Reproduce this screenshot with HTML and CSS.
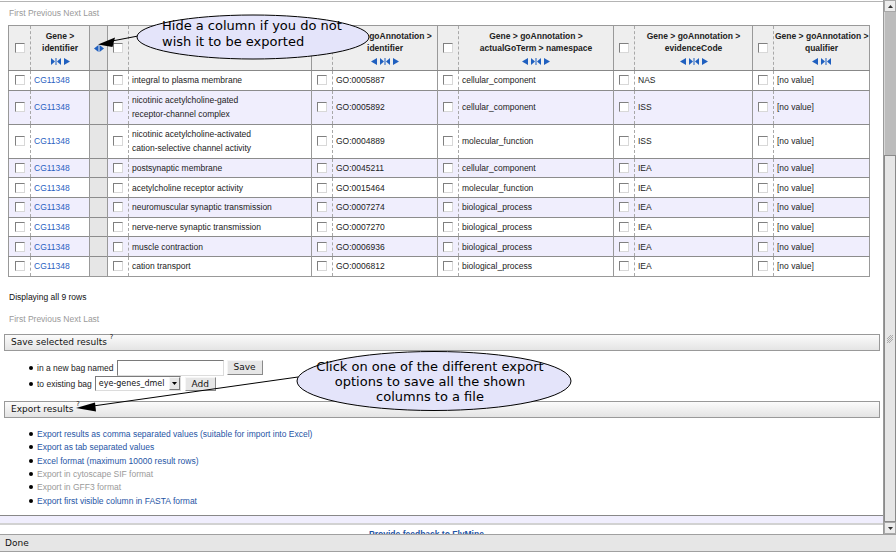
FILE: index.html
```html
<!DOCTYPE html>
<html>
<head>
<meta charset="utf-8">
<title>Results</title>
<link rel="stylesheet" href="styles.css">
</head>
<body>
<div class="window">
  <div class="viewport">
    <div class="page">
      <div class="rule"></div>
      <div class="pager top">First Previous Next Last</div>

      <table class="results">
        <colgroup>
          <col class="w-cb1"><col class="w-id"><col class="w-col"><col class="w-cb"><col class="w-name"><col class="w-cb"><col class="w-goid"><col class="w-cb"><col class="w-ns"><col class="w-cb"><col class="w-ev"><col class="w-cb"><col class="w-qual">
        </colgroup>
        <thead>
          <tr>
            <th class="cbcell"><span class="cb"></span></th>
            <th class="dash">
              <div>Gene &gt;</div><div>identifier</div>
              <div class="icons">
                <svg class="ic-c" viewBox="0 0 10 7"><polygon points="0,0 4,3.5 0,7"/><rect x="4.5" y="0" width="1" height="7"/><polygon points="10,0 6,3.5 10,7"/></svg>
                <svg class="ic" viewBox="0 0 6 7"><polygon points="0,0 6,3.5 0,7"/></svg>
              </div>
            </th>
            <th class="solid collapsed">
              <svg class="ic-e" viewBox="0 0 10 7"><polygon points="0,3.5 4.5,0 4.5,7"/><polygon points="5.5,0 10,3.5 5.5,7"/></svg>
            </th>
            <th class="cbcell solid"><span class="cb"></span></th>
            <th class="dash"></th>
            <th class="cbcell solid"><span class="cb"></span></th>
            <th class="dash">
              <div>Gene &gt; goAnnotation &gt;</div><div>identifier</div>
              <div class="icons">
                <svg class="ic" viewBox="0 0 6 7"><polygon points="6,0 0,3.5 6,7"/></svg>
                <svg class="ic-c" viewBox="0 0 10 7"><polygon points="0,0 4,3.5 0,7"/><rect x="4.5" y="0" width="1" height="7"/><polygon points="10,0 6,3.5 10,7"/></svg>
                <svg class="ic" viewBox="0 0 6 7"><polygon points="0,0 6,3.5 0,7"/></svg>
              </div>
            </th>
            <th class="cbcell solid"><span class="cb"></span></th>
            <th class="dash">
              <div>Gene &gt; goAnnotation &gt;</div><div>actualGoTerm &gt; namespace</div>
              <div class="icons">
                <svg class="ic" viewBox="0 0 6 7"><polygon points="6,0 0,3.5 6,7"/></svg>
                <svg class="ic-c" viewBox="0 0 10 7"><polygon points="0,0 4,3.5 0,7"/><rect x="4.5" y="0" width="1" height="7"/><polygon points="10,0 6,3.5 10,7"/></svg>
                <svg class="ic" viewBox="0 0 6 7"><polygon points="0,0 6,3.5 0,7"/></svg>
              </div>
            </th>
            <th class="cbcell solid"><span class="cb"></span></th>
            <th class="dash">
              <div>Gene &gt; goAnnotation &gt;</div><div>evidenceCode</div>
              <div class="icons">
                <svg class="ic" viewBox="0 0 6 7"><polygon points="6,0 0,3.5 6,7"/></svg>
                <svg class="ic-c" viewBox="0 0 10 7"><polygon points="0,0 4,3.5 0,7"/><rect x="4.5" y="0" width="1" height="7"/><polygon points="10,0 6,3.5 10,7"/></svg>
                <svg class="ic" viewBox="0 0 6 7"><polygon points="0,0 6,3.5 0,7"/></svg>
              </div>
            </th>
            <th class="cbcell solid"><span class="cb"></span></th>
            <th class="dash">
              <div>Gene &gt; goAnnotation &gt;</div><div>qualifier</div>
              <div class="icons">
                <svg class="ic" viewBox="0 0 6 7"><polygon points="6,0 0,3.5 6,7"/></svg>
                <svg class="ic-c" viewBox="0 0 10 7"><polygon points="0,0 4,3.5 0,7"/><rect x="4.5" y="0" width="1" height="7"/><polygon points="10,0 6,3.5 10,7"/></svg>
              </div>
            </th>
          </tr>
        </thead>
        <tbody>
          <tr>
            <td class="cbcell"><span class="cb"></span></td><td class="dash"><a class="gene">CG11348</a></td><td class="solid collapsed"></td>
            <td class="cbcell solid"><span class="cb"></span></td><td class="dash">integral to plasma membrane</td>
            <td class="cbcell solid"><span class="cb"></span></td><td class="dash">GO:0005887</td>
            <td class="cbcell solid"><span class="cb"></span></td><td class="dash">cellular_component</td>
            <td class="cbcell solid"><span class="cb"></span></td><td class="dash">NAS</td>
            <td class="cbcell solid"><span class="cb"></span></td><td class="dash">[no value]</td>
          </tr>
          <tr class="alt">
            <td class="cbcell"><span class="cb"></span></td><td class="dash"><a class="gene">CG11348</a></td><td class="solid collapsed"></td>
            <td class="cbcell solid"><span class="cb"></span></td><td class="dash">nicotinic acetylcholine-gated<br>receptor-channel complex</td>
            <td class="cbcell solid"><span class="cb"></span></td><td class="dash">GO:0005892</td>
            <td class="cbcell solid"><span class="cb"></span></td><td class="dash">cellular_component</td>
            <td class="cbcell solid"><span class="cb"></span></td><td class="dash">ISS</td>
            <td class="cbcell solid"><span class="cb"></span></td><td class="dash">[no value]</td>
          </tr>
          <tr>
            <td class="cbcell"><span class="cb"></span></td><td class="dash"><a class="gene">CG11348</a></td><td class="solid collapsed"></td>
            <td class="cbcell solid"><span class="cb"></span></td><td class="dash">nicotinic acetylcholine-activated<br>cation-selective channel activity</td>
            <td class="cbcell solid"><span class="cb"></span></td><td class="dash">GO:0004889</td>
            <td class="cbcell solid"><span class="cb"></span></td><td class="dash">molecular_function</td>
            <td class="cbcell solid"><span class="cb"></span></td><td class="dash">ISS</td>
            <td class="cbcell solid"><span class="cb"></span></td><td class="dash">[no value]</td>
          </tr>
          <tr class="alt">
            <td class="cbcell"><span class="cb"></span></td><td class="dash"><a class="gene">CG11348</a></td><td class="solid collapsed"></td>
            <td class="cbcell solid"><span class="cb"></span></td><td class="dash">postsynaptic membrane</td>
            <td class="cbcell solid"><span class="cb"></span></td><td class="dash">GO:0045211</td>
            <td class="cbcell solid"><span class="cb"></span></td><td class="dash">cellular_component</td>
            <td class="cbcell solid"><span class="cb"></span></td><td class="dash">IEA</td>
            <td class="cbcell solid"><span class="cb"></span></td><td class="dash">[no value]</td>
          </tr>
          <tr>
            <td class="cbcell"><span class="cb"></span></td><td class="dash"><a class="gene">CG11348</a></td><td class="solid collapsed"></td>
            <td class="cbcell solid"><span class="cb"></span></td><td class="dash">acetylcholine receptor activity</td>
            <td class="cbcell solid"><span class="cb"></span></td><td class="dash">GO:0015464</td>
            <td class="cbcell solid"><span class="cb"></span></td><td class="dash">molecular_function</td>
            <td class="cbcell solid"><span class="cb"></span></td><td class="dash">IEA</td>
            <td class="cbcell solid"><span class="cb"></span></td><td class="dash">[no value]</td>
          </tr>
          <tr class="alt">
            <td class="cbcell"><span class="cb"></span></td><td class="dash"><a class="gene">CG11348</a></td><td class="solid collapsed"></td>
            <td class="cbcell solid"><span class="cb"></span></td><td class="dash">neuromuscular synaptic transmission</td>
            <td class="cbcell solid"><span class="cb"></span></td><td class="dash">GO:0007274</td>
            <td class="cbcell solid"><span class="cb"></span></td><td class="dash">biological_process</td>
            <td class="cbcell solid"><span class="cb"></span></td><td class="dash">IEA</td>
            <td class="cbcell solid"><span class="cb"></span></td><td class="dash">[no value]</td>
          </tr>
          <tr>
            <td class="cbcell"><span class="cb"></span></td><td class="dash"><a class="gene">CG11348</a></td><td class="solid collapsed"></td>
            <td class="cbcell solid"><span class="cb"></span></td><td class="dash">nerve-nerve synaptic transmission</td>
            <td class="cbcell solid"><span class="cb"></span></td><td class="dash">GO:0007270</td>
            <td class="cbcell solid"><span class="cb"></span></td><td class="dash">biological_process</td>
            <td class="cbcell solid"><span class="cb"></span></td><td class="dash">IEA</td>
            <td class="cbcell solid"><span class="cb"></span></td><td class="dash">[no value]</td>
          </tr>
          <tr class="alt">
            <td class="cbcell"><span class="cb"></span></td><td class="dash"><a class="gene">CG11348</a></td><td class="solid collapsed"></td>
            <td class="cbcell solid"><span class="cb"></span></td><td class="dash">muscle contraction</td>
            <td class="cbcell solid"><span class="cb"></span></td><td class="dash">GO:0006936</td>
            <td class="cbcell solid"><span class="cb"></span></td><td class="dash">biological_process</td>
            <td class="cbcell solid"><span class="cb"></span></td><td class="dash">IEA</td>
            <td class="cbcell solid"><span class="cb"></span></td><td class="dash">[no value]</td>
          </tr>
          <tr>
            <td class="cbcell"><span class="cb"></span></td><td class="dash"><a class="gene">CG11348</a></td><td class="solid collapsed"></td>
            <td class="cbcell solid"><span class="cb"></span></td><td class="dash">cation transport</td>
            <td class="cbcell solid"><span class="cb"></span></td><td class="dash">GO:0006812</td>
            <td class="cbcell solid"><span class="cb"></span></td><td class="dash">biological_process</td>
            <td class="cbcell solid"><span class="cb"></span></td><td class="dash">IEA</td>
            <td class="cbcell solid"><span class="cb"></span></td><td class="dash">[no value]</td>
          </tr>
        </tbody>
      </table>

      <div class="count">Displaying all 9 rows</div>
      <div class="pager bottom">First Previous Next Last</div>

      <div class="bar save-bar">Save selected results <sup class="help">?</sup></div>
      <ul class="bag-form">
        <li><span>in a new bag named</span><input class="textbox" type="text"><button class="btn btn-save" type="button">Save</button></li>
        <li><span>to existing bag</span><span class="select"><span class="select-text">eye-genes_dmel</span><span class="select-arrow"><svg viewBox="0 0 5 3"><polygon points="0,0 5,0 2.5,3"/></svg></span></span><button class="btn btn-add" type="button">Add</button></li>
      </ul>

      <div class="bar export-bar">Export results <sup class="help">?</sup></div>
      <ul class="exports">
        <li><a class="link">Export results as comma separated values (suitable for import into Excel)</a></li>
        <li><a class="link">Export as tab separated values</a></li>
        <li><a class="link">Excel format (maximum 10000 result rows)</a></li>
        <li><span class="disabled">Export in cytoscape SIF format</span></li>
        <li><span class="disabled">Export in GFF3 format</span></li>
        <li><a class="link">Export first visible column in FASTA format</a></li>
      </ul>

      <div class="footer-band"></div>
      <div class="feedback"><a class="feedback-link">Provide feedback to FlyMine</a></div>
    </div>

    <svg class="callouts" viewBox="0 0 883 534" width="883" height="534">
      <line x1="112" y1="41" x2="138" y2="36" class="co-line"/>
      <polygon points="98,44.5 115,37.5 112.5,47" class="co-head"/>
      <ellipse cx="253" cy="37" rx="116" ry="22" class="co-bubble"/>
      <text x="162" y="29.5" class="co-text">Hide a column if you do not</text>
      <text x="162" y="45.5" class="co-text">wish it to be exported</text>

      <line x1="93" y1="406" x2="298" y2="377" class="co-line"/>
      <polygon points="76,408 95,402.5 96,411.5" class="co-head"/>
      <ellipse cx="434" cy="381" rx="137" ry="29.5" class="co-bubble"/>
      <text x="430" y="370.5" class="co-text mid">Click on one of the different export</text>
      <text x="430" y="385.5" class="co-text mid">options to save all the shown</text>
      <text x="430" y="400.5" class="co-text mid">columns to a file</text>
    </svg>
  </div>

  <div class="scrollbar">
    <div class="sb-btn"><svg viewBox="0 0 5 3"><polygon points="0,3 5,3 2.5,0"/></svg></div>
    <div class="sb-track"></div>
    <div class="sb-thumb">
      <svg class="grip" viewBox="0 0 6 8"><line x1="0" y1="4" x2="4" y2="0"/><line x1="0" y1="6" x2="6" y2="0"/><line x1="0" y1="8" x2="6" y2="2"/><line x1="2" y1="8" x2="6" y2="4"/></svg>
    </div>
    <div class="sb-btn"><svg viewBox="0 0 5 3"><polygon points="0,0 5,0 2.5,3"/></svg></div>
  </div>
</div>
<div class="status">Done</div>
</body>
</html>
```

FILE: styles.css
```css
* { box-sizing: border-box; }
html, body { margin: 0; padding: 0; }
body {
  width: 896px;
  height: 552px;
  overflow: hidden;
  background: #ffffff;
  font-family: "Liberation Sans", Arial, sans-serif;
  color: #222;
}

.window { display: flex; height: 534px; }
.viewport { position: relative; width: 883px; height: 534px; overflow: hidden; background: #fff; }
.page { padding-top: 1px; }
.rule { border-top: 1px solid #b4b4b4; }

.pager { font-size: 8.5px; line-height: 12px; color: #9a9a9a; margin-left: 9px; }
.pager.top { margin-top: 5px; }
.pager.bottom { margin-top: 10px; }

/* results table */
.results {
  margin: 6px 0 0 8px;
  width: 861px;
  table-layout: fixed;
  border-collapse: collapse;
  border: 1px solid #999;
  font-size: 8.5px;
}
.w-cb1 { width: 22px; }
.w-id { width: 59px; }
.w-col { width: 18px; }
.w-cb { width: 21px; }
.w-name { width: 183px; }
.w-goid { width: 105px; }
.w-ns { width: 155px; }
.w-ev { width: 118px; }
.w-qual { width: 96px; }

.results th {
  height: 45px;
  padding: 1px 1px 0;
  background: #eeeeee;
  font-weight: bold;
  line-height: 12.5px;
  text-align: center;
  vertical-align: middle;
  border-bottom: 1px solid #888;
  white-space: nowrap;
  color: #222;
}
.results td {
  padding: 2.4px 3px 2px;
  line-height: 14.3px;
  vertical-align: middle;
  border-top: 1px solid #8c8c8c;
  color: #222;
  white-space: nowrap;
}
.results tr.alt td { background: #f0eefd; }
.results .cbcell { padding: 0; }
.results .dash { border-left: 1px dashed #a8a8a8; }
.results .solid { border-left: 1px solid #999; }
.results tr td.collapsed, .results th.collapsed { background: #e6e6e6; padding: 0; }

.cb {
  display: block;
  margin: 0 auto;
  width: 10px;
  height: 10px;
  background: #fff;
  border: 1px solid;
  border-color: #808080 #d8d8d8 #d8d8d8 #808080;
}

.gene { color: #2a62c2; text-decoration: none; }

.icons { display: flex; justify-content: center; align-items: center; gap: 3px; height: 12.5px; }
.ic { width: 6px; height: 7px; fill: #1f5fbf; }
.ic-c { width: 10px; height: 7px; fill: #1f5fbf; }
.ic-e { display: block; margin: 0 auto; width: 10px; height: 7px; fill: #1f5fbf; }

.count { margin: 14px 0 0 9px; font-size: 8.5px; line-height: 12px; color: #111; }

/* section bars */
.bar {
  margin-left: 4px;
  width: 876px;
  height: 17px;
  border: 1px solid #999;
  background: linear-gradient(#fbfbfb, #e4e4e4);
  font-family: "DejaVu Sans", sans-serif;
  font-size: 9px;
  line-height: 15px;
  padding-left: 6px;
  color: #111;
}
.save-bar { margin-top: 9px; }
.export-bar { margin-top: 9px; }
.help { font-size: 6.5px; line-height: 0; position: relative; top: -2px; vertical-align: super; }

.bag-form, .exports { list-style: none; margin: 0; padding: 0; font-size: 8.5px; }
.bag-form { margin-top: 9px; }
.bag-form li, .exports li { display: flex; align-items: center; padding-left: 29px; white-space: nowrap; }
.bag-form li::before, .exports li::before {
  content: "";
  width: 4px;
  height: 4px;
  border-radius: 50%;
  background: #000;
  margin-right: 4px;
  flex: none;
}
.bag-form li { height: 16px; }

.textbox {
  margin: 0 0 0 3px;
  width: 107px;
  height: 16px;
  padding: 0;
  background: #fff;
  border: 1px solid;
  border-color: #7a7a7a #dcdcdc #dcdcdc #7a7a7a;
  outline: none;
}
.btn {
  margin: 0;
  padding: 0;
  height: 15px;
  background: #e6e6e6;
  border: 1px solid;
  border-color: #f6f6f6 #8a8a8a #8a8a8a #f6f6f6;
  font-family: "DejaVu Sans", sans-serif;
  font-size: 9px;
  line-height: 13px;
  color: #111;
}
.btn-save { margin-left: 3px; width: 36px; }
.btn-add { margin-left: 4px; width: 31px; height: 14px; }

.select {
  margin-left: 3px;
  width: 86px;
  height: 15px;
  display: flex;
  flex: none;
  background: #fff;
  border: 1px solid;
  border-color: #7a7a7a #dcdcdc #dcdcdc #7a7a7a;
}
.select-text {
  flex: 1;
  min-width: 0;
  white-space: nowrap;
  font-family: "DejaVu Sans", sans-serif;
  font-size: 8px;
  line-height: 13px;
  padding-left: 3px;
  color: #111;
}
.select-arrow {
  flex: none;
  width: 11px;
  height: 13px;
  background: #e6e6e6;
  border: 1px solid;
  border-color: #f6f6f6 #7a7a7a #7a7a7a #f6f6f6;
  display: flex;
  align-items: center;
  justify-content: center;
}
.select-arrow svg { width: 5px; height: 3px; fill: #000; }

.exports { margin-top: 9.3px; }
.exports li { height: 13.4px; }
.link { color: #1f55a5; text-decoration: none; }
.disabled { color: #9a9a9a; }

.footer-band {
  margin-top: 7.3px;
  height: 10px;
  border-top: 1px solid #888;
  border-bottom: 2px solid #d2d2d2;
  background: #f0eefd;
}
.feedback { padding-top: 3px; text-align: center; font-size: 8.5px; line-height: 12px; padding-right: 30px; }
.feedback-link { color: #1f55a5; font-weight: bold; text-decoration: underline; }

/* callouts overlay */
.callouts { position: absolute; left: 0; top: 0; pointer-events: none; }
.co-line { stroke: #000; stroke-width: 1; }
.co-head { fill: #000; }
.co-bubble { fill: #e4e4fa; stroke: #000; stroke-width: 1; }
.co-text { font-family: "DejaVu Sans", sans-serif; font-size: 13px; fill: #000; }
.co-text.mid { text-anchor: middle; }

/* scrollbar */
.scrollbar {
  width: 13px;
  height: 534px;
  border-left: 1px solid #9a9a9a;
  display: flex;
  flex-direction: column;
  background: #c4c4c4;
}
.sb-btn {
  height: 12px;
  flex: none;
  background: #ececec;
  border: 1px solid #a8a8a8;
  display: flex;
  align-items: center;
  justify-content: center;
}
.sb-btn svg { width: 5px; height: 3px; fill: #333; }
.sb-track { height: 143px; flex: none; background: #bcbcbc; border-left: 1px solid #d8d8d8; }
.sb-thumb {
  flex: 1;
  background: #e6e6e6;
  border: 1px solid #8a8a8a;
  display: flex;
  align-items: center;
  justify-content: center;
}
.grip { width: 6px; height: 8px; stroke: #9a9a9a; stroke-width: 0.8; }

/* status bar */
.status {
  height: 18px;
  border-top: 1px solid #a0a0a0;
  border-bottom: 1px solid #a0a0a0;
  background: #e6e6e6;
  font-family: "DejaVu Sans", sans-serif;
  font-size: 9px;
  line-height: 16px;
  padding-left: 5px;
  color: #111;
}
```
